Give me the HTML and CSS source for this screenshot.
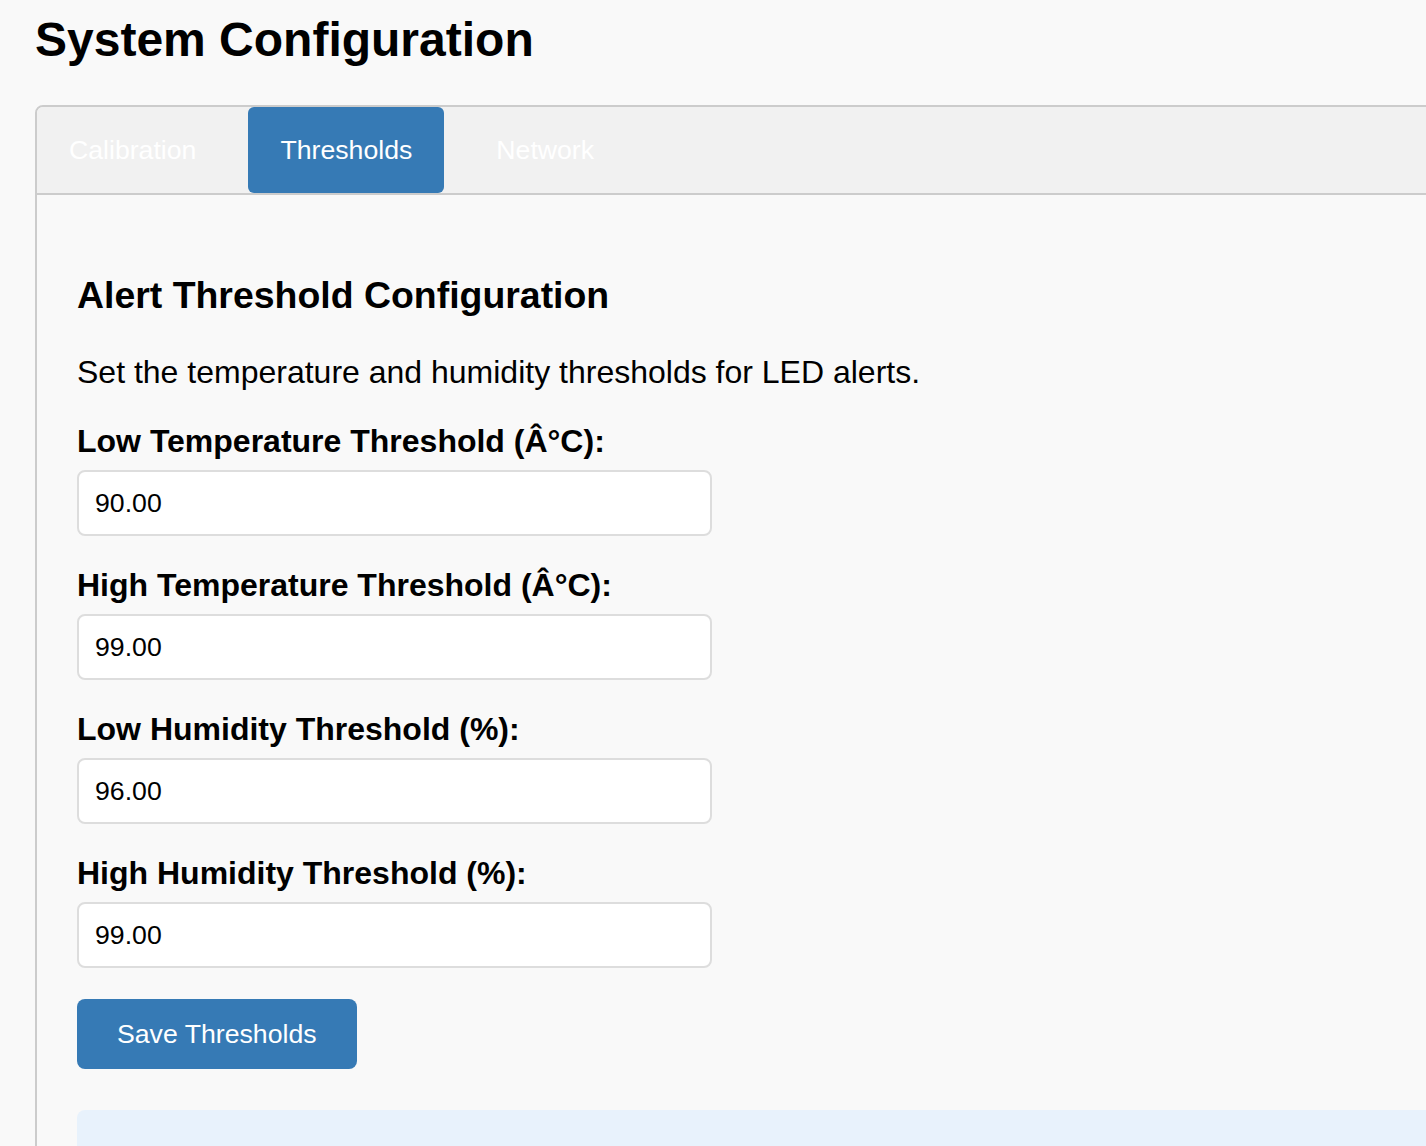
FILE: index.html
```html
<!DOCTYPE html>
<html lang="en">
<head>
<meta charset="utf-8">
<title>System Configuration</title>
<link rel="stylesheet" href="styles.css">
</head>
<body>
  <h1 class="page-title">System Configuration</h1>
  <div class="config-panel">
    <div class="tab-bar">
      <button class="tab">Calibration</button>
      <button class="tab tab-active">Thresholds</button>
      <button class="tab">Network</button>
    </div>
    <div class="tab-content">
      <h3 class="section-title">Alert Threshold Configuration</h3>
      <p class="section-desc">Set the temperature and humidity thresholds for LED alerts.</p>
      <form class="threshold-form">
        <div class="form-group">
          <label class="field-label" for="lowTemp">Low Temperature Threshold (Â°C):</label>
          <input class="field-input" id="lowTemp" type="text" value="90.00">
        </div>
        <div class="form-group">
          <label class="field-label" for="highTemp">High Temperature Threshold (Â°C):</label>
          <input class="field-input" id="highTemp" type="text" value="99.00">
        </div>
        <div class="form-group">
          <label class="field-label" for="lowHum">Low Humidity Threshold (%):</label>
          <input class="field-input" id="lowHum" type="text" value="96.00">
        </div>
        <div class="form-group">
          <label class="field-label" for="highHum">High Humidity Threshold (%):</label>
          <input class="field-input" id="highHum" type="text" value="99.00">
        </div>
        <button class="save-button" type="button">Save Thresholds</button>
      </form>
      <div class="info-box"></div>
    </div>
  </div>
</body>
</html>
```

FILE: styles.css
```css
html {
  overflow: hidden;
  background: #f9f9f9;
}

body {
  margin: 0;
  padding: 12px 0 0 35px;
  font-family: "Liberation Sans", Arial, Helvetica, sans-serif;
  font-size: 32px;
  color: #000;
  background: #f9f9f9;
}

.page-title {
  margin: 0 0 38px;
  font-size: 48px;
  font-weight: bold;
  line-height: 55px;
}

.config-panel {
  width: 1500px;
  border: 2px solid #ccc;
  border-radius: 8px;
  background: #f9f9f9;
}

.tab-bar {
  display: flex;
  gap: 20px;
  background: #f1f1f1;
  border-bottom: 2px solid #ccc;
  border-top-left-radius: 6px;
}

.tab {
  font-family: "Liberation Sans", Arial, Helvetica, sans-serif;
  font-size: 26.67px;
  line-height: 30px;
  padding: 28px 32px;
  border: none;
  border-radius: 6px;
  background: transparent;
  color: #fff;
  cursor: pointer;
}

.tab-active {
  background: #367ab5;
}

.tab-content {
  padding: 42px 40px;
}

.section-title {
  margin: 37px 0;
  font-size: 37.44px;
  line-height: 43px;
  font-weight: bold;
}

.section-desc {
  margin: 0 0 32px;
  line-height: 37px;
}

.form-group + .form-group {
  margin-top: 31px;
}

.field-label {
  display: block;
  margin-bottom: 10px;
  font-weight: bold;
  line-height: 37px;
}

.field-input {
  display: block;
  box-sizing: border-box;
  width: 635px;
  height: 66px;
  padding: 0 16px;
  border: 2px solid #ddd;
  border-radius: 8px;
  background: #fff;
  font-family: "Liberation Sans", Arial, Helvetica, sans-serif;
  font-size: 26.67px;
  color: #000;
}

.save-button {
  display: block;
  margin-top: 31px;
  padding: 20px 40px;
  border: none;
  border-radius: 8px;
  background: #367ab5;
  color: #fff;
  font-family: "Liberation Sans", Arial, Helvetica, sans-serif;
  font-size: 26.67px;
  line-height: 30px;
  cursor: pointer;
}

.info-box {
  margin-top: 41px;
  height: 200px;
  border-radius: 8px;
  background: #e8f2fc;
}
```
